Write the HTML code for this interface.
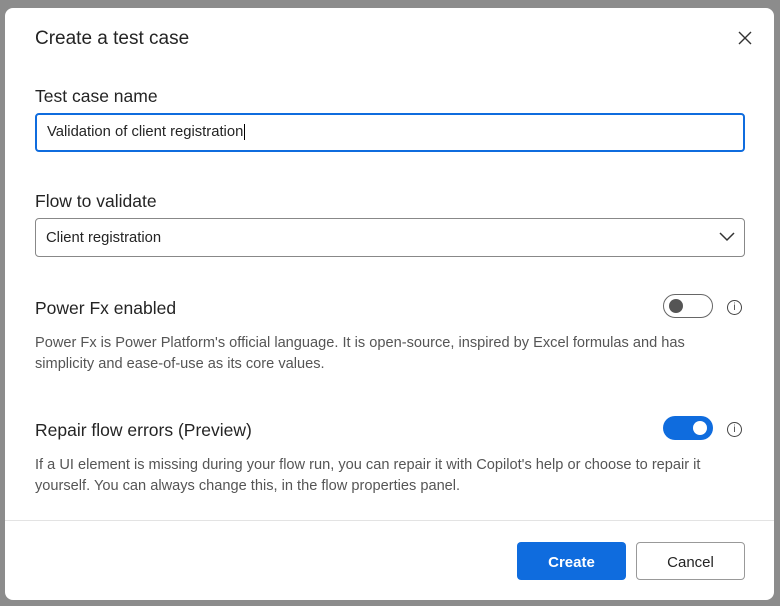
<html><head><style>
body{margin:0;width:780px;height:606px;background:#8c8c8c;font-family:"Liberation Sans",sans-serif;position:relative;overflow:hidden}
.d{position:absolute;left:5px;top:8px;width:769px;height:592px;background:#fff;border-radius:8px}
.a{position:absolute;color:#242424}
.t{font-size:19px;left:35px;top:28px}
.l{font-size:17.5px;left:35px}
.p{font-size:14.6px;color:#555;left:35px;line-height:21px;width:690px}
.in{position:absolute;left:35px;width:710px;box-sizing:border-box;font-size:14.8px;color:#242424}
.tog{position:absolute;left:663px;width:50px;height:24px;box-sizing:border-box;border-radius:12px}
.info{position:absolute;left:727px;width:13px;height:13px;border:1px solid #444;border-radius:50%;font-size:10px;text-align:center;line-height:13px;color:#444}
.b{position:absolute;top:542px;height:38px;width:109px;box-sizing:border-box;border-radius:4px;font-size:15px;text-align:center;line-height:38px;padding-top:3px}
</style></head><body>
<div class="d"></div>
<div class="a t">Create a test case</div>
<svg style="position:absolute;left:738px;top:31px" width="14" height="14"><path d="M1 1L13 13M13 1L1 13" stroke="#333" stroke-width="1.4"/></svg>
<div class="a l" style="top:86px">Test case name</div>
<div class="in" style="top:113px;height:39px;border:2px solid #0f6cde;border-radius:4px;padding:9px 10px">Validation of client registration<span style="border-left:1px solid #000;margin-left:1px"></span></div>
<div class="a l" style="top:191px">Flow to validate</div>
<div class="in" style="top:218px;height:39px;border:1px solid #888;border-radius:4px;padding:11px 10px">Client registration</div>
<svg style="position:absolute;left:719px;top:232px" width="16" height="10"><path d="M1 1L8 8L15 1" fill="none" stroke="#333" stroke-width="1.5"/></svg>
<div class="a l" style="top:298px">Power Fx enabled</div>
<div class="tog" style="top:294px;border:1.5px solid #666"><div style="position:absolute;left:5px;top:4px;width:14px;height:14px;border-radius:50%;background:#555"></div></div>
<div class="info" style="top:300px">i</div>
<div class="a p" style="top:333px">Power Fx is Power Platform's official language. It is open-source, inspired by Excel formulas and has simplicity and ease-of-use as its core values.</div>
<div class="a l" style="top:420px">Repair flow errors (Preview)</div>
<div class="tog" style="top:416px;background:#0f6cde"><div style="position:absolute;right:6px;top:5px;width:14px;height:14px;border-radius:50%;background:#fff"></div></div>
<div class="info" style="top:422px">i</div>
<div class="a p" style="top:455px">If a UI element is missing during your flow run, you can repair it with Copilot's help or choose to repair it yourself. You can always change this, in the flow properties panel.</div>
<div style="position:absolute;left:5px;top:520px;width:769px;height:1px;background:#e3e3e3"></div>
<div class="b" style="left:517px;background:#0f6cde;color:#fff;font-weight:bold;line-height:35px">Create</div>
<div class="b" style="left:636px;border:1px solid #999;color:#242424;line-height:33px">Cancel</div>
</body></html>
